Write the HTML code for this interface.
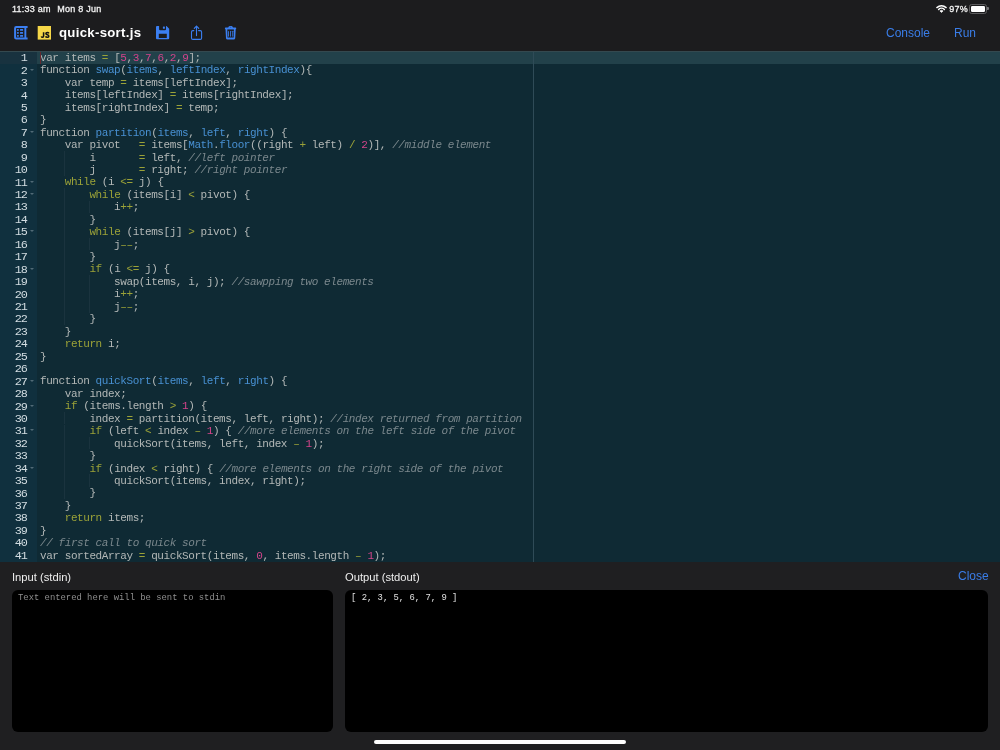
<!DOCTYPE html>
<html><head><meta charset="utf-8">
<style>
*{margin:0;padding:0;box-sizing:border-box}
html,body{width:1000px;height:750px;overflow:hidden;background:#1c1c1e;font-family:"Liberation Sans",sans-serif}
#status{will-change:transform;position:absolute;left:0;top:0;width:1000px;height:17px;color:#f2f2f2;font-size:9px;font-weight:normal;-webkit-text-stroke:0.3px #f2f2f2;letter-spacing:0.25px}
#status .t{position:absolute;top:3.5px}
#tb{position:absolute;left:0;top:17px;width:1000px;height:34px}
#title{will-change:transform;position:absolute;left:58.8px;top:8px;color:#fff;font-size:13.2px;font-weight:bold;letter-spacing:0.3px}
.btn{will-change:transform;position:absolute;color:#3a7de8;font-size:12px}
#editor{position:absolute;left:0;top:51px;width:1000px;height:511px;background:#0f2a34;overflow:hidden}
#gutter{position:absolute;left:0;top:0;will-change:transform;width:37px;height:511px;background:#10303e}
.gn{position:absolute;left:0;margin-top:1.2px;width:27px;text-align:right;height:12.45px;line-height:12.45px;color:#d3dde2;font-family:"Liberation Mono",monospace;font-size:11.8px;letter-spacing:-0.92px}
.fd{position:absolute;left:30px;top:4px;width:0;height:0;border-left:2.2px solid transparent;border-right:2.2px solid transparent;border-top:2.6px solid #516a76}
#code{position:absolute;left:40.4px;top:1px;will-change:transform}
.ln{position:absolute;left:0;white-space:pre;height:12.45px;line-height:12.45px;color:#b3b8b7;font-family:"Liberation Mono",monospace;font-size:11px;letter-spacing:-0.425px}
.ln b{font-weight:normal;color:#4890d2}
.ln u{text-decoration:none;color:#9ba238}
.ln s{text-decoration:none;color:#d4448b}
.ln i{color:#7b888d}
#active{position:absolute;left:37px;top:0;width:963px;height:13px;background:#22414a}
#topline{position:absolute;left:0;top:0;width:1000px;height:1px;background:#34494f}
#gactive{position:absolute;left:0;top:0;width:37px;height:13px;background:#18323f}
.ig{position:absolute;width:1px;height:12.45px;background:#1a333e}
#margin{position:absolute;left:533px;top:0;width:1px;height:511px;background:#2f4b57}
#cursor{position:absolute;left:40px;top:0.5px;width:1px;height:12px;background:#66292e}
#panel{position:absolute;left:0;top:562px;width:1000px;height:188px;background:#1f1f21}
.lbl{will-change:transform;position:absolute;color:#eee;font-size:11.2px}
.box{position:absolute;background:#000;border-radius:6px}
.mono{will-change:transform;position:absolute;font-family:"Liberation Mono",monospace;font-size:8.87px}
#home{position:absolute;left:374px;top:740px;width:252px;height:4px;border-radius:2px;background:#fff}
</style></head><body>
<div id="status">
  <div class="t" style="left:12px">11:33 am</div>
  <div class="t" style="left:57.3px">Mon 8 Jun</div>
  <svg style="position:absolute;left:936.3px;top:4.3px" width="11" height="9" viewBox="0 0 11 9">
    <path d="M0.9 3.6 A6.9 6.9 0 0 1 10.1 3.6" fill="none" stroke="#fff" stroke-width="1.45" stroke-linecap="round"/>
    <path d="M2.6 5.4 A4.2 4.2 0 0 1 8.4 5.4" fill="none" stroke="#fff" stroke-width="1.45" stroke-linecap="round"/>
    <path d="M5.5 8.5 L3.9 6.9 A2.3 2.3 0 0 1 7.1 6.9 Z" fill="#fff" stroke="#fff" stroke-width="0.6" stroke-linejoin="round"/>
  </svg>
  <div class="t" style="left:949.3px">97%</div>
  <div style="position:absolute;left:969px;top:4.2px;width:18px;height:9.4px;border:0.9px solid #5e5e60;border-radius:2.6px"></div>
  <div style="position:absolute;left:970.7px;top:5.9px;width:14.6px;height:6.1px;background:#fff;border-radius:1.2px"></div>
  <div style="position:absolute;left:987.4px;top:7.3px;width:1.6px;height:3.2px;background:#77777a;border-radius:0 1px 1px 0"></div>
</div>
<div id="tb">
  <svg style="position:absolute;left:0;top:-17px" width="250" height="51" viewBox="0 0 250 51">
    <!-- sidebar icon -->
    <path d="M27.6 27.1 H16.2 Q15.1 27.1 15.1 28.2 V37.5 Q15.1 38.6 16.2 38.6 H27.6" fill="none" stroke="#3b7ff2" stroke-width="2"/>
    <rect x="24.4" y="27" width="1.9" height="11.7" fill="#3b7ff2"/>
    <rect x="17" y="29.05" width="1.8" height="1.7" rx="0.5" fill="#3b7ff2"/>
    <rect x="17" y="32.05" width="1.8" height="1.7" rx="0.5" fill="#3b7ff2"/>
    <rect x="17" y="34.95" width="1.8" height="1.7" rx="0.5" fill="#3b7ff2"/>
    <rect x="20" y="29.05" width="3.1" height="1.7" rx="0.5" fill="#3b7ff2"/>
    <rect x="20" y="32.05" width="3.1" height="1.7" rx="0.5" fill="#3b7ff2"/>
    <rect x="20" y="34.95" width="3.1" height="1.7" rx="0.5" fill="#3b7ff2"/>
    <!-- js icon -->
    <rect x="37.7" y="26" width="13.3" height="13.6" fill="#f6d748"/>
    <path d="M43.6 32.3 V36.1 Q43.6 37.3 42.5 37.3 Q41.6 37.3 41.4 36.4" fill="none" stroke="#141414" stroke-width="1.55"/><path d="M48.9 33.3 Q48.5 32.5 47.3 32.5 Q45.9 32.5 45.9 33.6 Q45.9 34.5 47.3 34.8 Q48.8 35.1 48.8 36.2 Q48.8 37.3 47.3 37.3 Q45.9 37.3 45.5 36.4" fill="none" stroke="#141414" stroke-width="1.55"/>
    <!-- save -->
    <path d="M157 26.1 H166.5 L169.2 28.8 V38.3 Q169.2 39.3 168.2 39.3 H157 Q156 39.3 156 38.3 V27.1 Q156 26.1 157 26.1 Z M159.1 26.1 V29.2 Q159.1 30.2 160.1 30.2 H165 Q166 30.2 166 29.2 V26.1 Z M158.8 33.8 V37.9 H166.8 V33.8 Z" fill="#3b7ff2" fill-rule="evenodd"/>
    <rect x="162.9" y="26.4" width="2" height="2.4" rx="0.6" fill="#3b7ff2"/>
    <!-- share -->
    <path d="M193.8 30.6 H192.9 Q191.5 30.6 191.5 32 V38 Q191.5 39.4 192.9 39.4 H200.2 Q201.6 39.4 201.6 38 V32 Q201.6 30.6 200.2 30.6 H198.6" fill="none" stroke="#3b7ff2" stroke-width="1.1" stroke-linecap="round"/>
    <path d="M196.5 35.6 V26.4" fill="none" stroke="#3b7ff2" stroke-width="1.1" stroke-linecap="round"/>
    <path d="M194.3 28.4 L196.5 26.1 L198.7 28.4" fill="none" stroke="#3b7ff2" stroke-width="1.2" stroke-linecap="round" stroke-linejoin="round"/>
    <!-- trash -->
    <path d="M228.1 27.9 L228.9 26.5 Q229.15 26.1 229.6 26.1 H231.6 Q232.05 26.1 232.3 26.5 L233.1 27.9 Z" fill="#3b7ff2"/>
    <ellipse cx="230.6" cy="27.2" rx="0.7" ry="0.45" fill="#1c2a44"/>
    <rect x="224.9" y="27.6" width="11.3" height="1.6" rx="0.7" fill="#3b7ff2"/>
    <path d="M225.5 29 H235.7 L235.2 38.2 Q235.1 39.6 233.7 39.6 H227.5 Q226.1 39.6 226 38.2 Z M227.3 29.35 L227.5 37.6 H233.7 L233.9 29.35 Z" fill="#3b7ff2" fill-rule="evenodd"/>
    <rect x="228.02" y="30.8" width="0.85" height="5.9" rx="0.42" fill="#3b7ff2"/>
    <rect x="230.18" y="30.8" width="0.85" height="5.9" rx="0.42" fill="#3b7ff2"/>
    <rect x="232.33" y="30.8" width="0.85" height="5.9" rx="0.42" fill="#3b7ff2"/>
  </svg>
  <div id="title">quick-sort.js</div>
  <div class="btn" style="left:885.6px;top:9px">Console</div>
  <div class="btn" style="left:953.6px;top:9px">Run</div>
</div>
<div id="editor">
  <div id="gutter"><div id="gactive"></div>
<div class="gn" style="top:0.00px">1</div>
<div class="gn" style="top:12.44px">2<span class="fd"></span></div>
<div class="gn" style="top:24.88px">3</div>
<div class="gn" style="top:37.32px">4</div>
<div class="gn" style="top:49.76px">5</div>
<div class="gn" style="top:62.20px">6</div>
<div class="gn" style="top:74.64px">7<span class="fd"></span></div>
<div class="gn" style="top:87.08px">8</div>
<div class="gn" style="top:99.52px">9</div>
<div class="gn" style="top:111.96px">10</div>
<div class="gn" style="top:124.40px">11<span class="fd"></span></div>
<div class="gn" style="top:136.84px">12<span class="fd"></span></div>
<div class="gn" style="top:149.28px">13</div>
<div class="gn" style="top:161.72px">14</div>
<div class="gn" style="top:174.16px">15<span class="fd"></span></div>
<div class="gn" style="top:186.60px">16</div>
<div class="gn" style="top:199.04px">17</div>
<div class="gn" style="top:211.48px">18<span class="fd"></span></div>
<div class="gn" style="top:223.92px">19</div>
<div class="gn" style="top:236.36px">20</div>
<div class="gn" style="top:248.80px">21</div>
<div class="gn" style="top:261.24px">22</div>
<div class="gn" style="top:273.68px">23</div>
<div class="gn" style="top:286.12px">24</div>
<div class="gn" style="top:298.56px">25</div>
<div class="gn" style="top:311.00px">26</div>
<div class="gn" style="top:323.44px">27<span class="fd"></span></div>
<div class="gn" style="top:335.88px">28</div>
<div class="gn" style="top:348.32px">29<span class="fd"></span></div>
<div class="gn" style="top:360.76px">30</div>
<div class="gn" style="top:373.20px">31<span class="fd"></span></div>
<div class="gn" style="top:385.64px">32</div>
<div class="gn" style="top:398.08px">33</div>
<div class="gn" style="top:410.52px">34<span class="fd"></span></div>
<div class="gn" style="top:422.96px">35</div>
<div class="gn" style="top:435.40px">36</div>
<div class="gn" style="top:447.84px">37</div>
<div class="gn" style="top:460.28px">38</div>
<div class="gn" style="top:472.72px">39</div>
<div class="gn" style="top:485.16px">40</div>
<div class="gn" style="top:497.60px">41</div>
  </div>
  <div id="active"></div>
  <div id="margin"></div>
<div class="ig" style="left:63.90px;top:99.82px"></div>
<div class="ig" style="left:63.90px;top:112.26px"></div>
<div class="ig" style="left:63.90px;top:137.14px"></div>
<div class="ig" style="left:63.90px;top:149.58px"></div>
<div class="ig" style="left:88.60px;top:149.58px"></div>
<div class="ig" style="left:63.90px;top:162.02px"></div>
<div class="ig" style="left:63.90px;top:174.46px"></div>
<div class="ig" style="left:63.90px;top:186.90px"></div>
<div class="ig" style="left:88.60px;top:186.90px"></div>
<div class="ig" style="left:63.90px;top:199.34px"></div>
<div class="ig" style="left:63.90px;top:211.78px"></div>
<div class="ig" style="left:63.90px;top:224.22px"></div>
<div class="ig" style="left:88.60px;top:224.22px"></div>
<div class="ig" style="left:63.90px;top:236.66px"></div>
<div class="ig" style="left:88.60px;top:236.66px"></div>
<div class="ig" style="left:63.90px;top:249.10px"></div>
<div class="ig" style="left:88.60px;top:249.10px"></div>
<div class="ig" style="left:63.90px;top:261.54px"></div>
<div class="ig" style="left:63.90px;top:361.06px"></div>
<div class="ig" style="left:63.90px;top:373.50px"></div>
<div class="ig" style="left:63.90px;top:385.94px"></div>
<div class="ig" style="left:88.60px;top:385.94px"></div>
<div class="ig" style="left:63.90px;top:398.38px"></div>
<div class="ig" style="left:63.90px;top:410.82px"></div>
<div class="ig" style="left:63.90px;top:423.26px"></div>
<div class="ig" style="left:88.60px;top:423.26px"></div>
<div class="ig" style="left:63.90px;top:435.70px"></div>
  <div id="code">
<div class="ln" style="top:0.00px">var items <u>=</u> [<s>5</s>,<s>3</s>,<s>7</s>,<s>6</s>,<s>2</s>,<s>9</s>];</div>
<div class="ln" style="top:12.44px">function <b>swap</b>(<b>items</b>, <b>leftIndex</b>, <b>rightIndex</b>){</div>
<div class="ln" style="top:24.88px">    var temp <u>=</u> items[leftIndex];</div>
<div class="ln" style="top:37.32px">    items[leftIndex] <u>=</u> items[rightIndex];</div>
<div class="ln" style="top:49.76px">    items[rightIndex] <u>=</u> temp;</div>
<div class="ln" style="top:62.20px">}</div>
<div class="ln" style="top:74.64px">function <b>partition</b>(<b>items</b>, <b>left</b>, <b>right</b>) {</div>
<div class="ln" style="top:87.08px">    var pivot   <u>=</u> items[<b>Math</b>.<b>floor</b>((right <u>+</u> left) <u>/</u> <s>2</s>)], <i>//middle element</i></div>
<div class="ln" style="top:99.52px">        i       <u>=</u> left, <i>//left pointer</i></div>
<div class="ln" style="top:111.96px">        j       <u>=</u> right; <i>//right pointer</i></div>
<div class="ln" style="top:124.40px">    <u>while</u> (i <u>&lt;=</u> j) {</div>
<div class="ln" style="top:136.84px">        <u>while</u> (items[i] <u>&lt;</u> pivot) {</div>
<div class="ln" style="top:149.28px">            i<u>++</u>;</div>
<div class="ln" style="top:161.72px">        }</div>
<div class="ln" style="top:174.16px">        <u>while</u> (items[j] <u>&gt;</u> pivot) {</div>
<div class="ln" style="top:186.60px">            j<u>––</u>;</div>
<div class="ln" style="top:199.04px">        }</div>
<div class="ln" style="top:211.48px">        <u>if</u> (i <u>&lt;=</u> j) {</div>
<div class="ln" style="top:223.92px">            swap(items, i, j); <i>//sawpping two elements</i></div>
<div class="ln" style="top:236.36px">            i<u>++</u>;</div>
<div class="ln" style="top:248.80px">            j<u>––</u>;</div>
<div class="ln" style="top:261.24px">        }</div>
<div class="ln" style="top:273.68px">    }</div>
<div class="ln" style="top:286.12px">    <u>return</u> i;</div>
<div class="ln" style="top:298.56px">}</div>
<div class="ln" style="top:311.00px"></div>
<div class="ln" style="top:323.44px">function <b>quickSort</b>(<b>items</b>, <b>left</b>, <b>right</b>) {</div>
<div class="ln" style="top:335.88px">    var index;</div>
<div class="ln" style="top:348.32px">    <u>if</u> (items.length <u>&gt;</u> <s>1</s>) {</div>
<div class="ln" style="top:360.76px">        index <u>=</u> partition(items, left, right); <i>//index returned from partition</i></div>
<div class="ln" style="top:373.20px">        <u>if</u> (left <u>&lt;</u> index <u>–</u> <s>1</s>) { <i>//more elements on the left side of the pivot</i></div>
<div class="ln" style="top:385.64px">            quickSort(items, left, index <u>–</u> <s>1</s>);</div>
<div class="ln" style="top:398.08px">        }</div>
<div class="ln" style="top:410.52px">        <u>if</u> (index <u>&lt;</u> right) { <i>//more elements on the right side of the pivot</i></div>
<div class="ln" style="top:422.96px">            quickSort(items, index, right);</div>
<div class="ln" style="top:435.40px">        }</div>
<div class="ln" style="top:447.84px">    }</div>
<div class="ln" style="top:460.28px">    <u>return</u> items;</div>
<div class="ln" style="top:472.72px">}</div>
<div class="ln" style="top:485.16px"><i>// first call to quick sort</i></div>
<div class="ln" style="top:497.60px">var sortedArray <u>=</u> quickSort(items, <s>0</s>, items.length <u>–</u> <s>1</s>);</div>
  </div>
  <div id="cursor"></div>
  <div id="topline"></div>
</div>
<div id="panel">
  <div class="lbl" style="left:12px;top:9px">Input (stdin)</div>
  <div class="lbl" style="left:345px;top:9px">Output (stdout)</div>
  <div class="btn" style="left:958px;top:7px">Close</div>
  <div class="box" style="left:12px;top:28px;width:321px;height:142px"></div>
  <div class="box" style="left:345px;top:28px;width:643px;height:142px"></div>
  <div class="mono" style="left:18px;top:31px;color:#8e8e8e">Text entered here will be sent to stdin</div>
  <div class="mono" style="left:351px;top:31px;color:#e0e0e0">[ 2, 3, 5, 6, 7, 9 ]</div>
</div>
<div id="home"></div>
</body></html>
